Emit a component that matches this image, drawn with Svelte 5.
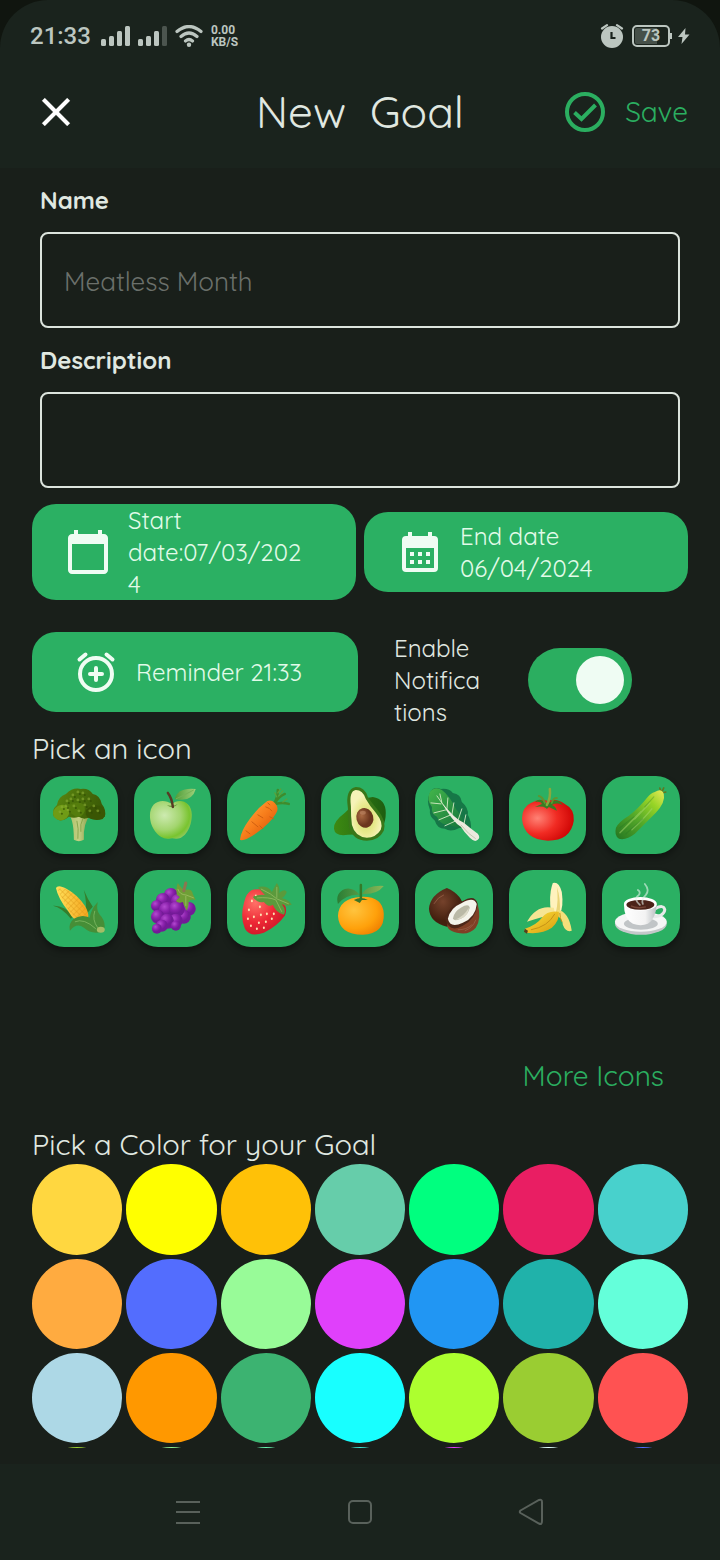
<script>
  let name = $state('');
  let description = $state('');
  let notify = $state(true);
  let icon = $state('broccoli');
  let color = $state('#FFD740');

  const foods = [
    'broccoli', 'apple', 'carrot', 'avocado', 'lettuce', 'tomato', 'cucumber',
    'corn', 'grapes', 'strawberry', 'orange', 'coconut', 'banana', 'coffee'
  ];

  const colors = [
    '#FFD740', '#FFFF00', '#FFC107', '#66CDAA', '#00FF7F', '#E91E63', '#48D1CC',
    '#FFAB40', '#536DFE', '#98FB98', '#E040FB', '#2196F3', '#20B2AA', '#64FFDA',
    '#ADD8E6', '#FF9800', '#3CB371', '#18FFFF', '#ADFF2F', '#9ACD32', '#FF5252',
    '#9ACD32', '#90EE90', '#69F0AE', '#40E0D0', '#E040FB', '#E0FFFF', '#536DFE'
  ];

  const berries = [
    [37, 25, 7], [29, 30, 7], [44, 31, 7], [23, 36, 6], [55, 39, 7], [50, 47, 7],
    [33, 40, 8], [24, 47, 7], [43, 39, 8], [42, 51, 7], [33, 51, 7], [42, 56, 5],
    [28, 56, 6], [23, 59, 5]
  ];
  const seeds = [
    [25, 31], [33, 37], [22, 40], [27, 47], [34, 45], [39, 52], [45, 49], [32, 53],
    [40, 44], [47, 44], [24, 56], [30, 59], [37, 58], [21, 49], [29, 26]
  ];
  const florets = [
    [22, 31], [27, 25], [33, 19], [38, 24], [43, 17], [49, 23], [54, 30], [45, 29],
    [34, 30], [28, 34], [39, 35], [50, 35], [38, 16], [20, 36], [58, 35], [43, 23],
    [31, 23], [26, 30]
  ];
</script>

<svelte:head><title>New Goal</title></svelte:head>

{#snippet food(kind)}
  <svg class="food" viewBox="0 0 78 78" aria-hidden="true">
    {#if kind === 'broccoli'}
      <defs>
        <linearGradient id="br-stem"><stop offset="0" stop-color="#a9bd62" /><stop offset=".5" stop-color="#c3cf83" /><stop offset="1" stop-color="#7f9a42" /></linearGradient>
        <linearGradient id="br-top" x2="1" y2=".2"><stop offset="0" stop-color="#5c8a10" /><stop offset="1" stop-color="#3b5a06" /></linearGradient>
      </defs>
      <path fill="url(#br-stem)" d="M27 37Q34 41 34 64Q39 67 44 64Q43 48 51 38Z" />
      <path fill="url(#br-top)" d="M14 41Q11 34 17 29Q18 21 26 18Q33 11 41 13Q49 12 53 18Q60 19 62 28Q67 34 65 41Q59 46 49 42Q43 44 39 41Q34 43 29 41Q23 46 18 44Z" />
      <path fill="#6f9b16" d="M14 41Q11 34 18 30Q25 27 29 32Q31 40 24 44Q18 46 14 41Z" />
      <path fill="#557d0d" d="M29 36Q26 29 34 27Q46 25 45 35Q43 42 36 41Z" />
      <path fill="#3a5604" d="M46 34Q56 25 64 33Q68 42 60 44Q49 45 46 39Z" />
      {#each florets as [x, y]}
        <circle cx={x} cy={y} r="1.4" fill="#8aac35" opacity=".6" />
        <circle cx={x + 2} cy={y + 2} r="1" fill="#314d04" opacity=".7" />
      {/each}
      <path stroke="#8ba64c" stroke-width="1" fill="none" d="M37 45Q39 52 38 63M43 43Q40 48 41 56" />
    {:else if kind === 'apple'}
      <defs>
        <radialGradient id="ap" cx=".35" cy=".38" r=".7"><stop offset="0" stop-color="#cdeab0" /><stop offset=".55" stop-color="#a3d56f" /><stop offset=".85" stop-color="#79c42f" /><stop offset="1" stop-color="#8fc75a" /></radialGradient>
        <linearGradient id="ap-leaf"><stop offset="0" stop-color="#4f9d38" /><stop offset="1" stop-color="#9fd07a" /></linearGradient>
      </defs>
      <path fill="url(#ap)" d="M38 28C45 22 58 25 58 39C58 53 50 64 42 63Q38 62 35 63C25 64 16 52 16 40C16 25 29 22 38 28Z" />
      <path fill="#5f902e" opacity=".8" d="M33 29Q39 34 44 28Q39 31 33 29Z" />
      <path fill="url(#ap-leaf)" d="M41 23Q44 11 62 13Q58 27 41 23Z" />
      <path stroke="#74b256" stroke-width="1" fill="none" d="M42 23Q49 20 60 14" />
      <path stroke="#583a24" stroke-width="2.5" stroke-linecap="round" fill="none" d="M34 17Q38 22 39 31" />
    {:else if kind === 'carrot'}
      <defs><linearGradient id="ca" x1=".2" y1=".2" x2=".8" y2=".8"><stop offset="0" stop-color="#ff9c34" /><stop offset=".5" stop-color="#f77d1b" /><stop offset="1" stop-color="#dd5a0b" /></linearGradient></defs>
      <g fill="none" stroke-linecap="round" stroke="#3f8b2c" stroke-width="2.5">
        <path d="M47 28Q51 22 51 14M48 27Q53 20 58 18M49 28Q55 26 62 28" />
        <path stroke="#5aa23d" stroke-width="1.3" d="M50 21L48 17M52 20L56 15M56 26L60 23M51 17L54 13" />
      </g>
      <path fill="url(#ca)" d="M38 27Q43 22 48 27Q53 32 49 38Q43 48 30 57Q17 66 13 64Q14 55 23 43Q31 32 38 27Z" />
      <path stroke="#cf5e10" stroke-width="1" stroke-linecap="round" fill="none" d="M39 31Q43 32 45 35M31 39L36 42M43 41L47 43M25 46L31 51M33 50L36 53M19 55L23 58M41 27L43 29" />
    {:else if kind === 'avocado'}
      <defs>
        <linearGradient id="av" x2="1"><stop offset="0" stop-color="#3d8a12" /><stop offset="1" stop-color="#1e5d10" /></linearGradient>
        <radialGradient id="av-flesh" cy=".6"><stop offset="0" stop-color="#cddb68" /><stop offset=".6" stop-color="#e8e98e" /><stop offset="1" stop-color="#f6f3b8" /></radialGradient>
        <radialGradient id="av-pit" cx=".35" cy=".35"><stop offset="0" stop-color="#a96a42" /><stop offset="1" stop-color="#6b351d" /></radialGradient>
      </defs>
      <path fill="url(#av)" d="M52 21Q65 23 65 37Q65 54 53 58L27 59Q14 61 13 53Q12 46 24 37Q37 22 52 21Z" />
      <path fill="#397719" d="M35 11Q44 11 47 21Q51 27 57 34Q66 45 63 55Q58 65 46 65Q32 65 28 51Q27 42 27 32Q24 13 35 11Z" />
      <path fill="url(#av-flesh)" d="M35 14Q42 14 45 23Q49 30 55 37Q63 47 60 54Q55 62 46 62Q34 61 31 49Q30 41 30 30Q28 15 35 14Z" />
      <ellipse cx="44" cy="42" rx="8.5" ry="10" fill="url(#av-pit)" transform="rotate(-15 44 42)" />
      <ellipse cx="42" cy="37" rx="3" ry="2" fill="#c18a67" opacity=".6" />
    {:else if kind === 'lettuce'}
      <defs><linearGradient id="le" x2="1" y2="1"><stop offset="0" stop-color="#43b64a" /><stop offset="1" stop-color="#16743c" /></linearGradient></defs>
      <path fill="#167747" d="M15 17Q18 10 26 13Q34 12 38 17Q46 18 47 26Q54 32 53 39Q57 46 56 54L45 52Q36 57 30 53Q22 53 20 45Q14 40 15 34Q11 24 15 17Z" />
      <path fill="url(#le)" d="M15 16Q20 10 27 14Q35 20 41 33Q49 41 49 52Q39 52 33 48Q26 50 22 41Q16 38 17 31Q11 24 15 16Z" />
      <path stroke="#d6ebc6" stroke-width="1" stroke-linecap="round" fill="none" opacity=".9" d="M22 20Q31 34 46 48M27 27L25 18M32 34L33 22M37 39L39 27M43 45L47 33M26 28L16 27M31 34L19 37M36 39L24 44M41 45L30 50M49 49L51 39" />
      <path fill="#eceade" d="M27 27Q40 43 49 47Q56 53 63 58Q66 62 63 64Q60 67 55 62Q49 56 46 51Q38 46 27 27Z" />
      <path stroke="#c5c9b2" stroke-width="1" fill="none" d="M46 49Q54 59 61 63" />
    {:else if kind === 'tomato'}
      <defs><radialGradient id="to" cx=".3" cy=".45" r=".75"><stop offset="0" stop-color="#ff8275" /><stop offset=".5" stop-color="#f12b23" /><stop offset="1" stop-color="#c90000" /></radialGradient></defs>
      <path fill="url(#to)" d="M39 25Q48 22 56 28Q66 33 65 45Q62 65 39 65Q15 64 13 43Q13 31 22 27Q31 22 39 25Z" />
      <path fill="#397d23" d="M37 27Q31 21 26 26Q32 25 33 28L26 31Q34 30 37 32Q38 34 40 31L48 35Q47 30 43 29Q48 26 54 29Q49 22 42 26Z" />
      <path stroke="#8aa83e" stroke-width="2.5" stroke-linecap="round" fill="none" d="M38 29Q42 22 41 13" />
      <path stroke="#5e9530" stroke-width="2" stroke-linecap="round" fill="none" d="M36 27Q34 21 30 20M43 27Q44 22 48 22" />
    {:else if kind === 'cucumber'}
      <defs><linearGradient id="cu" x1="1" y1="0" x2="0" y2="1"><stop offset="0" stop-color="#e8ea5c" /><stop offset=".25" stop-color="#97d426" /><stop offset=".55" stop-color="#56aa29" /><stop offset="1" stop-color="#237522" /></linearGradient></defs>
      <path stroke="#5f7821" stroke-width="1.6" stroke-linecap="round" d="M59 18L62 12M60 17L64 16M59 15L58 12" />
      <path fill="url(#cu)" d="M53 16Q60 12 62 18Q64 26 54 37L33 58Q24 65 17 63Q12 60 14 52Q17 46 27 40Q38 31 45 22Q49 17 53 16Z" />
      <path stroke="#a5d76c" stroke-width="1.5" stroke-linecap="round" fill="none" opacity=".5" d="M18 57Q28 47 39 36M33 43L48 27M30 54Q42 43 50 33" />
      <path stroke="#246f23" stroke-width="1.2" stroke-linecap="round" fill="none" opacity=".3" d="M18 52L32 41M24 58L41 43M43 31L52 21" />
    {:else if kind === 'corn'}
      <defs>
        <linearGradient id="co" x2="1"><stop offset="0" stop-color="#ffe15b" /><stop offset="1" stop-color="#f5a51e" /></linearGradient>
        <pattern id="co-k" width="4" height="4" patternUnits="userSpaceOnUse" patternTransform="rotate(45)"><path d="M0 4H4V0" fill="none" stroke="#dc9516" stroke-width=".8" /></pattern>
      </defs>
      <path fill="#357e2c" d="M13 36Q23 35 34 46L31 49Q22 38 13 36ZM44 20Q48 30 53 37L46 45Q47 31 44 20Z" />
      <path fill="url(#co)" d="M16 18Q18 14 27 19Q38 25 45 36Q52 48 45 52Q36 55 28 41Q18 28 16 18Z" />
      <path fill="url(#co-k)" d="M17 19Q27 17 38 27Q48 39 48 47L42 52Q35 50 28 39Z" />
      <path fill="#468e37" d="M58 32Q51 39 50 48Q42 44 34 49Q28 54 30 61Q37 52 44 58Q52 65 62 62L65 57Q65 50 60 45Q56 40 58 32Z" />
      <path stroke="#80ba65" stroke-width="1" fill="none" opacity=".8" d="M55 41Q52 50 58 58M35 52Q44 48 56 59" />
      <ellipse cx="61" cy="60" rx="4" ry="3" fill="#a4bd66" />
    {:else if kind === 'grapes'}
      <defs><radialGradient id="gr" cx=".35" cy=".3"><stop offset="0" stop-color="#b34ad0" /><stop offset=".6" stop-color="#8c23ad" /><stop offset="1" stop-color="#731a97" /></radialGradient></defs>
      <path fill="#7ba33a" d="M31 23Q36 17 45 20L53 24Q42 27 31 23Z" />
      <path fill="#7a1c9c" d="M24 31L36 24L54 38L50 48L42 58L24 60L20 46Z" />
      {#each berries as [x, y, r]}<circle cx={x} cy={y} r={r} fill="url(#gr)" />{/each}
      <path fill="#6f9f36" d="M43 25Q42 18 44 13Q48 19 51 20Q58 18 59 24L62 30Q58 29 55 31Q55 36 53 41Q50 36 49 32Q45 34 42 31Q44 29 46 27Z" />
      <path stroke="#a6c36a" stroke-width="1" fill="none" opacity=".7" d="M44 19Q46 25 52 25L60 28M52 26L52 36" />
      <path stroke="#8b7650" stroke-width="3" stroke-linecap="round" d="M50 21L52 13" />
    {:else if kind === 'strawberry'}
      <defs><radialGradient id="st" cx=".3" cy=".3" r=".8"><stop offset="0" stop-color="#ff7167" /><stop offset=".55" stop-color="#ed2734" /><stop offset="1" stop-color="#c71528" /></radialGradient></defs>
      <path fill="url(#st)" d="M25 20Q39 17 49 27Q63 35 58 46Q50 57 37 63Q23 68 18 59Q13 47 17 33Q19 23 25 20Z" />
      {#each seeds as [x, y]}<ellipse cx={x} cy={y} rx="1" ry="1.3" fill="#ffe3b3" />{/each}
      <path fill="#5b9a3c" d="M31 17Q41 15 45 22L50 13Q54 18 52 23Q58 18 60 22Q58 27 55 28Q63 30 65 35Q59 37 55 34Q60 40 57 45Q49 43 46 35Q42 38 37 32Q31 34 26 27Q32 24 38 25Q34 21 31 17Z" />
      <path stroke="#96bb65" stroke-width="1" fill="none" opacity=".8" d="M34 19Q45 24 50 29L62 34M30 28Q42 27 49 30L55 42M50 28L50 17" />
    {:else if kind === 'orange'}
      <defs>
        <radialGradient id="or" cx=".35" cy=".35" r=".75"><stop offset="0" stop-color="#ffc43e" /><stop offset=".65" stop-color="#ffa10b" /><stop offset="1" stop-color="#ef7f00" /></radialGradient>
        <linearGradient id="or-leaf"><stop offset="0" stop-color="#2a7e34" /><stop offset="1" stop-color="#86b757" /></linearGradient>
      </defs>
      <path fill="url(#or-leaf)" d="M17 34Q14 23 24 19Q32 17 39 25Q26 24 17 34ZM41 24Q46 15 63 16Q56 25 41 24Z" />
      <path fill="url(#or)" d="M40 27Q62 26 63 44Q64 64 42 65Q18 65 17 46Q18 28 40 27Z" />
      <path fill="#387428" d="M33 30Q40 26 47 30L41 30L39 33Z" />
      <path stroke="#347a27" stroke-width="2.5" stroke-linecap="round" d="M40 29V15" />
    {:else if kind === 'coconut'}
      <defs><radialGradient id="cn" cx=".4" cy=".35"><stop offset="0" stop-color="#75422b" /><stop offset="1" stop-color="#44200f" /></radialGradient></defs>
      <path fill="url(#cn)" d="M32 18Q48 25 49 39Q48 55 32 57Q15 53 14 39Q15 25 32 18Z" />
      <path fill="#803f25" d="M33 53Q30 60 42 63Q54 66 61 58Q67 49 63 35Q56 46 33 53Z" />
      <path fill="#4d2718" d="M30 48Q34 36 48 31Q60 24 63 34Q61 49 48 56Q34 64 30 48Z" />
      <path fill="#f4f4eb" d="M33 49Q35 38 47 33Q59 26 62 34Q61 47 48 53Q35 59 33 49Z" />
      <path fill="#bab9a6" d="M38 49Q39 42 46 38Q54 33 55 38Q53 46 46 49Q40 52 38 49Z" />
      <path fill="#dbd9c7" d="M40 50Q49 47 54 38Q54 46 46 49Z" />
      <path stroke="#976048" stroke-width=".8" fill="none" d="M19 34Q23 27 29 25M43 60Q52 60 57 55M50 61Q58 58 61 50" />
    {:else if kind === 'banana'}
      <defs><linearGradient id="ba" x2="1" y2="1"><stop offset="0" stop-color="#ffe33f" /><stop offset="1" stop-color="#d79b0c" /></linearGradient></defs>
      <path fill="#fff2bd" d="M44 13Q50 11 53 22Q55 37 51 44L42 42Q40 26 43 16Z" />
      <path fill="#ead477" d="M48 17Q52 28 51 44L47 43Q50 30 48 17Z" />
      <path fill="#f6e594" d="M45 38Q28 34 18 52Q24 50 31 48L46 44Z" />
      <path fill="#f4df7a" d="M49 40Q60 42 63 61Q57 63 54 55Q54 49 47 45Z" />
      <path fill="url(#ba)" d="M50 42Q51 51 43 58Q33 65 17 63Q15 61 16 59Q28 55 33 48Q39 40 50 42Z" />
      <path stroke="#c69215" stroke-width="1" fill="none" d="M46 44Q39 57 22 60M51 43Q51 48 53 52" />
      <path fill="#56411d" d="M16 59L19 61L18 64L15 62Z" />
    {:else}
      <defs>
        <linearGradient id="cf" x2="1"><stop offset="0" stop-color="#fff" /><stop offset=".65" stop-color="#f3f3f3" /><stop offset="1" stop-color="#b9bec1" /></linearGradient>
      </defs>
      <ellipse cx="39" cy="54" rx="26" ry="11" fill="#c5c8ca" />
      <ellipse cx="39" cy="52" rx="26" ry="10" fill="#f5f6f6" />
      <ellipse cx="39" cy="54" rx="17" ry="6" fill="#c1c5c7" />
      <path fill="none" stroke="#e7e9e9" stroke-width="3" d="M53 39Q62 34 63 40Q62 47 50 47" />
      <path fill="url(#cf)" d="M22 34Q22 49 31 54Q39 57 46 54Q54 49 55 34Z" />
      <ellipse cx="38.5" cy="34" rx="16.5" ry="7" fill="#fff" />
      <ellipse cx="38.5" cy="35" rx="14" ry="5" fill="#4b2218" />
      <path fill="none" stroke="#764537" stroke-width="1.5" d="M29 36Q35 39 44 37" />
      <path fill="none" stroke="#e5f4ec" stroke-width="1.8" stroke-linecap="round" opacity=".6" d="M38 35Q31 29 37 25Q39 22 36 20M41 34Q39 30 44 25Q48 20 43 14" />
    {/if}
  </svg>
{/snippet}

<div class="screen">
  <div class="top">
    <div class="status">
      <span class="clock">21:33</span>
      <svg width="29" height="20" viewBox="0 0 29 20" aria-hidden="true">
        <g fill="#bcc6c0"><rect y="13" width="5" height="7" rx="1.5" /><rect x="8" y="10" width="5" height="10" rx="1.5" /><rect x="16" y="5" width="5" height="15" rx="1.5" /><rect x="24" width="5" height="20" rx="1.5" /></g>
      </svg>
      <svg width="29" height="20" viewBox="0 0 29 20" aria-hidden="true">
        <g fill="#bcc6c0"><rect y="13" width="5" height="7" rx="1.5" /><rect x="8" y="10" width="5" height="10" rx="1.5" /><rect x="16" y="5" width="5" height="15" rx="1.5" /><rect x="24" width="5" height="20" rx="1.5" fill="#4c554f" /></g>
      </svg>
      <svg width="28" height="22" viewBox="0 0 28 22" aria-hidden="true">
        <g fill="none" stroke="#bcc6c0" stroke-width="3.2" stroke-linecap="round"><path d="M2 6.5Q14-3.500 26 6.500M6 11.500Q14 4.500 22 11.500M10.500 16Q14 13 17.500 16" /></g>
        <circle cx="14" cy="19.8" r="2.2" fill="#bcc6c0" />
      </svg>
      <span class="speed">0.00<br />KB/S</span>
      <span class="grow"></span>
      <svg width="24" height="24" viewBox="0 0 24 24" aria-hidden="true">
        <g stroke="#bcc6c0" stroke-width="2.2" stroke-linecap="round"><path d="M2 4.500L7 1.200M22 4.500L17 1.200" /></g>
        <circle cx="12" cy="13" r="11" fill="#bcc6c0" />
        <path d="M11.500 8V14H15.500" fill="none" stroke="#1a231d" stroke-width="2.2" />
      </svg>
      <span class="battery">73</span>
      <svg width="12" height="16" viewBox="0 0 12 16" aria-hidden="true"><path d="M7.500 0L0 9H4.500L3.500 16L11.500 6.500H7Z" fill="#bcc6c0" /></svg>
    </div>

    <header>
      <button class="close" aria-label="Close">
        <svg width="48" height="48" viewBox="0 0 24 24"><path fill="#fff" stroke="#fff" stroke-width=".1" d="M19 6.410L17.590 5 12 10.590 6.410 5 5 6.410 10.590 12 5 17.590 6.410 19 12 13.410 17.590 19 19 17.590 13.410 12z" /></svg>
      </button>
      <h1>New  Goal</h1>
      <button class="save">
        <svg width="48" height="48" viewBox="0 0 48 48" fill="none" stroke="#2bae60" stroke-width="4" aria-hidden="true"><circle cx="24" cy="24" r="18" /><path d="M13.500 24.500L20.500 31L34.500 17" /></svg>
        Save
      </button>
    </header>
  </div>

  <main>
    <div class="fields">
      <label for="name">Name</label>
      <input id="name" type="text" placeholder="Meatless Month" bind:value={name} />
      <label for="description">Description</label>
      <input id="description" type="text" bind:value={description} />
    </div>

    <div class="dates">
      <button class="pill">
        <svg width="48" height="48" viewBox="0 0 24 24" aria-hidden="true"><path d="M20 3h-1V1h-2v2H7V1H5v2H4c-1.100 0-2 .900-2 2v16c0 1.100.900 2 2 2h16c1.100 0 2-.900 2-2V5c0-1.100-.900-2-2-2zm0 18H4V8h16v13z" /></svg>
        <span>Start date:07/03/2024</span>
      </button>
      <button class="pill">
        <svg width="48" height="48" viewBox="0 0 24 24" aria-hidden="true"><path fill-rule="evenodd" d="M19 4h-1V2h-2v2H8V2H6v2H5a2 2 0 0 0-2 2v14a2 2 0 0 0 2 2h14a2 2 0 0 0 2-2V6a2 2 0 0 0-2-2zm0 16H5V10h14z" /><path d="M7 12h2v2H7zM11 12h2v2h-2zM15 12h2v2h-2zM7 16h2v2H7zM11 16h2v2h-2zM15 16h2v2h-2z" /></svg>
        <span>End date<br />06/04/2024</span>
      </button>
    </div>

    <div class="alerts">
      <button class="pill reminder">
        <svg width="48" height="48" viewBox="0 0 48 48" aria-hidden="true"><g class="line"><circle cx="24" cy="26" r="16" /><path d="M24 20V32M18 26H30M7.500 11.500L13.500 6.500M40.500 11.500L34.500 6.500" /></g></svg>
        <span>Reminder 21:33</span>
      </button>
      <label class="notify" for="notify">Enable Notifications</label>
      <input id="notify" class="switch" type="checkbox" role="switch" bind:checked={notify} />
    </div>

    <h2>Pick an icon</h2>
    <div class="icons">
      {#each foods as kind}
        <button class="tile" aria-label={kind} aria-pressed={icon === kind} onclick={() => (icon = kind)}>
          {@render food(kind)}
        </button>
      {/each}
    </div>
    <button class="more">More Icons</button>

    <h2>Pick a Color for your Goal</h2>
    <div class="colors">
      {#each colors as c}
        <button class="dot" style:background={c} aria-label={c} aria-pressed={color === c} onclick={() => (color = c)}></button>
      {/each}
    </div>
  </main>

  <nav>
    <button aria-label="Recent apps"><svg width="28" height="28" viewBox="0 0 28 28"><path d="M2 4H26M2 14H26M2 25H26" /></svg></button>
    <button aria-label="Home"><svg width="28" height="28" viewBox="0 0 28 28"><rect x="3" y="3" width="22" height="22" rx="4" /></svg></button>
    <button aria-label="Back"><svg width="28" height="28" viewBox="0 0 28 28"><path d="M2.500 12.500L21 2Q24 1 24 4V23Q24 27 21 25.500L2.500 15Q1 14 2.500 12.500Z" /></svg></button>
  </nav>
</div>

<style>
  :global(body) {
    margin: 0;
    background: #10150f;
  }
  .screen {
    display: flex;
    flex-direction: column;
    height: 100vh;
    box-sizing: border-box;
    font-family: Quicksand, Inter, "Open Sans", sans-serif;
    font-weight: 400;
    color: #e0e8e1;
  }
  button {
    margin: 0;
    padding: 0;
    border: 0;
    background: none;
    font: inherit;
    color: inherit;
    cursor: pointer;
  }
  svg {
    display: block;
    flex: none;
  }
  .top {
    background: #1a231d;
    border-radius: 48px 48px 0 0;
    padding-bottom: 16px;
  }
  .status {
    display: flex;
    align-items: center;
    gap: 8px;
    height: 72px;
    padding: 0 30px;
    color: #bcc6c0;
    font-family: Roboto, sans-serif;
    font-weight: 500;
  }
  .clock {
    margin-right: 2px;
    font-size: 24px;
    line-height: 32px;
  }
  .speed {
    font-size: 12px;
    line-height: 12px;
    font-weight: 700;
  }
  .grow {
    flex: 1;
  }
  .battery {
    position: relative;
    box-sizing: border-box;
    width: 38px;
    border: 2px solid #bcc6c0;
    border-radius: 5px;
    background: linear-gradient(90deg, #465049 70%, transparent 70%) content-box;
    padding: 1px;
    font-size: 16px;
    line-height: 16px;
    font-weight: 700;
    text-align: center;
  }
  .battery::after {
    content: "";
    position: absolute;
    top: 6px;
    right: -4px;
    width: 2px;
    height: 6px;
    background: #bcc6c0;
  }
  header {
    display: grid;
    grid-template-columns: 1fr auto 1fr;
    align-items: center;
    height: 80px;
    padding: 0 32px;
  }
  .close {
    justify-self: start;
  }
  h1 {
    margin: 0;
    font-size: 44px;
    line-height: 56px;
    font-weight: 400;
    white-space: pre;
  }
  .save {
    justify-self: end;
    display: flex;
    align-items: center;
    gap: 16px;
    color: #2bae60;
    font-size: 28px;
    line-height: 32px;
  }
  main {
    flex: 1;
    min-height: 0;
    display: flex;
    flex-direction: column;
    background: #191f1a;
    padding: 16px 32px;
  }
  .fields {
    display: flex;
    flex-direction: column;
    padding: 0 8px;
  }
  .fields label {
    font-size: 24px;
    line-height: 32px;
    font-weight: 700;
    margin-bottom: 16px;
  }
  .fields input {
    box-sizing: border-box;
    width: 100%;
    height: 96px;
    margin: 0 0 16px;
    padding: 2px 22px 0;
    border: 2px solid #dce4dd;
    border-radius: 8px;
    background: transparent;
    color: inherit;
    font: inherit;
    font-size: 26px;
    outline: none;
  }
  .fields input::placeholder {
    color: #6b706b;
    opacity: 1;
  }
  .dates {
    display: grid;
    grid-template-columns: 1fr 1fr;
    align-items: center;
    gap: 8px;
  }
  .pill {
    display: flex;
    align-items: center;
    gap: 16px;
    min-height: 80px;
    padding: 0 52px 0 32px;
    border-radius: 24px;
    background: #2bb063;
    color: #e2fbe9;
    fill: #effcf3;
    font-size: 24px;
    line-height: 32px;
    text-align: left;
  }
  .pill span {
    min-width: 0;
    overflow-wrap: anywhere;
  }
  .line {
    fill: none;
    stroke: #effcf3;
    stroke-width: 4px;
    stroke-linecap: round;
  }
  .alerts {
    display: flex;
    align-items: center;
    height: 80px;
    padding-top: 32px;
    gap: 36px;
  }
  .reminder {
    flex: 1;
    padding: 0 40px;
  }
  .notify {
    width: 90px;
    margin: 0 8px 0 0;
    font-size: 24px;
    line-height: 32px;
    overflow-wrap: anywhere;
  }
  .switch {
    appearance: none;
    width: 104px;
    height: 64px;
    box-sizing: border-box;
    margin: 0 56px 0 0;
    padding: 8px;
    border-radius: 32px;
    background: #4a534d;
    display: flex;
    cursor: pointer;
  }
  .notify,
  .switch {
    margin-top: 16px;
  }
  .switch::before {
    content: "";
    width: 48px;
    height: 48px;
    border-radius: 50%;
    background: #effcf3;
  }
  .switch:checked {
    background: #2bae60;
    justify-content: flex-end;
  }
  h2 {
    margin: 0;
    font-size: 29px;
    line-height: 40px;
    font-weight: 400;
  }
  .alerts + h2 {
    margin-top: 16px;
  }
  .icons {
    display: grid;
    grid-template-columns: repeat(7, 1fr);
    gap: 16px;
    padding: 8px 8px 0;
  }
  .tile {
    aspect-ratio: 1;
    border-radius: 24px;
    background: #2bb063;
    box-shadow: 0 4px 6px rgba(0, 0, 0, 0.35);
  }
  .food {
    width: 100%;
  }
  .more {
    align-self: flex-end;
    margin: 109px 24px 28px 0;
    color: #2bae60;
    font-size: 28px;
    line-height: 40px;
  }
  .colors {
    flex: 1;
    min-height: 0;
    overflow-y: auto;
    scrollbar-width: none;
    display: grid;
    grid-template-columns: repeat(7, 1fr);
    align-content: start;
    gap: 4px;
  }
  .dot {
    aspect-ratio: 1;
    border-radius: 50%;
  }
  nav {
    display: flex;
    justify-content: center;
    align-items: center;
    gap: 144px;
    height: 96px;
    background: #1a231d;
  }
  nav svg {
    fill: none;
    stroke: #59615b;
    stroke-width: 2px;
  }
</style>
